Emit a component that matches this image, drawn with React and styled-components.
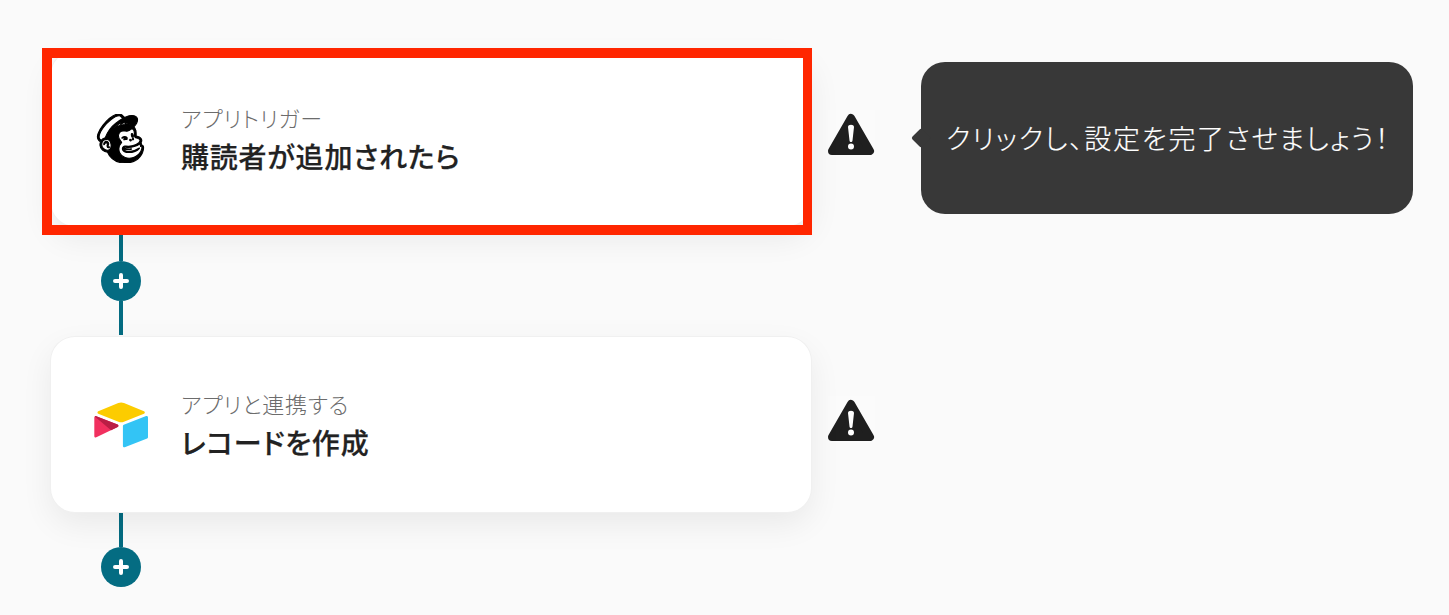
import React from 'react';
import styled, { createGlobalStyle } from 'styled-components';
import { SiMailchimp } from 'react-icons/si';

const GlobalStyle = createGlobalStyle`
  html, body {
    margin: 0;
    padding: 0;
    height: 100%;
    background: #fafafa;
    overflow: hidden;
    font-family: 'Noto Sans CJK JP', 'Noto Sans', sans-serif;
    font-feature-settings: 'palt';
  }
`;

const Flow = styled.main`
  display: flex;
  flex-direction: column;
  padding: 51px 0 0 51px;
`;

const StepRow = styled.section`
  display: flex;
  align-items: center;
`;

const Card = styled.div`
  position: relative;
  box-sizing: border-box;
  width: 760px;
  height: 175px;
  padding-left: 40px;
  display: flex;
  align-items: center;
  gap: 30px;
  background: #fff;
  border-radius: 24px;
  box-shadow: 0 0 0 1px #f0f0f0, 0 12px 32px rgba(0, 0, 0, 0.07);
`;

// red annotation drawn on top of the first card
const Highlight = styled.div`
  position: absolute;
  top: -3px;
  left: -9px;
  right: -1px;
  bottom: -9px;
  border: solid #ff2600;
  border-width: 10px 9px 10px 10px;
`;

const AppIcon = styled.div`
  width: 60px;
  display: flex;
  justify-content: center;
`;

const MailchimpLogo = styled(SiMailchimp)`
  width: 49px;
  height: 49px;
  margin-left: -2px;
  color: #000;
`;

const CardText = styled.div`
  display: flex;
  flex-direction: column;
  gap: 5px;
  margin-top: 2px;
`;

const Label = styled.span`
  font-size: 22px;
  line-height: 28px;
  font-weight: 300;
  letter-spacing: 0.8px;
  color: #6c6c6c;
`;

const Title = styled.span`
  font-size: 28px;
  line-height: 40px;
  font-weight: 500;
  letter-spacing: 0.8px;
  -webkit-text-stroke: 0.25px #222;
  color: #222;
`;

const WarningBox = styled.div`
  width: 47px;
  height: 47px;
  margin: 0 0 10px 17px;
  background: #fbfbfb;
`;

const Tooltip = styled.div`
  position: relative;
  box-sizing: border-box;
  width: 492px;
  height: 152px;
  margin: 0 0 1px 46px;
  padding: 0 0 1px 25px;
  display: flex;
  align-items: center;
  background: #383838;
  border-radius: 24px;
  color: #fff;
  font-size: 27px;
  font-weight: 300;
  letter-spacing: 1.7px;
  -webkit-text-stroke: 0.2px #fff;
  white-space: nowrap;
  &::before {
    content: '';
    position: absolute;
    left: -7px;
    top: 69px;
    width: 14px;
    height: 14px;
    border-radius: 2px;
    background: #383838;
    transform: rotate(45deg);
  }
`;

const Connector = styled.div`
  width: 40px;
  height: ${(p) => p.$height}px;
  margin-left: 50px;
  display: flex;
  flex-direction: column;
  align-items: center;
`;

const Line = styled.div`
  width: 4px;
  height: ${(p) => p.$length}px;
  background: #046c82;
`;

const AddButton = styled.div`
  flex: none;
  width: 40px;
  height: 40px;
  border-radius: 50%;
  background: #046c82;
  display: flex;
  align-items: center;
  justify-content: center;
`;

const Warning = () => (
  <WarningBox>
    <svg width="47" height="47" viewBox="0 0 47 47">
      <path
        d="M23 8 L42 41 L4 41 Z"
        fill="#1f1f1f"
        stroke="#1f1f1f"
        strokeWidth="8"
        strokeLinejoin="round"
      />
      <path d="M20 17 C20 14 26 14 26 17 L24.500 30.500 C24.300 32.500 21.700 32.500 21.500 30.500 Z" fill="#fff" />
      <circle cx="23" cy="36.500" r="3" fill="#fff" />
    </svg>
  </WarningBox>
);

const Plus = () => (
  <svg width="16" height="16" viewBox="0 0 16 16">
    <path d="M8 2 V14 M2 8 H14" stroke="#fff" strokeWidth="4" strokeLinecap="round" />
  </svg>
);

const AirtableLogo = () => (
  <svg width="54" height="46" viewBox="10 10 178 150">
    <path fill="#fccc00" d="M90.039 12.368 24.079 39.66c-3.667 1.519-3.63 6.729.062 8.192l66.235 26.266a24.58 24.58 0 0 0 18.12 0l66.236-26.266c3.69-1.463 3.729-6.673.062-8.192l-65.96-27.292a24.58 24.58 0 0 0-18.795 0" />
    <path fill="#33c4f5" d="M105.312 88.46v65.617c0 3.12 3.147 5.258 6.048 4.108l73.806-28.648a4.42 4.42 0 0 0 2.79-4.108V59.813c0-3.121-3.147-5.258-6.048-4.108l-73.806 28.648a4.42 4.42 0 0 0-2.79 4.108" />
    <path fill="#f1305f" d="M88.078 91.846l-21.904 10.576-2.224 1.075-46.238 22.155c-2.93 1.414-6.672-.722-6.672-3.978V60.088c0-1.178.604-2.195 1.414-2.96a5 5 0 0 1 1.12-.84c1.104-.663 2.68-.84 4.02-.31L87.71 83.76c3.564 1.414 3.844 6.408.368 8.087" />
    <path fill="#ba1e45" d="M88.078 91.846l-21.904 10.576-53.72-45.295a5 5 0 0 1 1.12-.84c1.104-.663 2.68-.84 4.02-.31L87.71 83.76c3.564 1.414 3.844 6.408.368 8.087" />
  </svg>
);

const App = () => (
  <>
    <GlobalStyle />
    <Flow>
      <StepRow>
        <Card>
          <AppIcon>
            <MailchimpLogo strokeWidth={0.55} />
          </AppIcon>
          <CardText>
            <Label>アプリトリガー</Label>
            <Title>購読者が追加されたら</Title>
          </CardText>
          <Highlight />
        </Card>
        <Warning />
        <Tooltip>クリックし、設定を完了させましょう！</Tooltip>
      </StepRow>
      <Connector $height={111}>
        <Line $length={35} />
        <AddButton><Plus /></AddButton>
        <Line $length={34} />
      </Connector>
      <StepRow>
        <Card>
          <AppIcon>
            <AirtableLogo />
          </AppIcon>
          <CardText>
            <Label>アプリと連携する</Label>
            <Title>レコードを作成</Title>
          </CardText>
        </Card>
        <Warning />
      </StepRow>
      <Connector $height={75}>
        <Line $length={35} />
        <AddButton><Plus /></AddButton>
      </Connector>
    </Flow>
  </>
);

export default App;
